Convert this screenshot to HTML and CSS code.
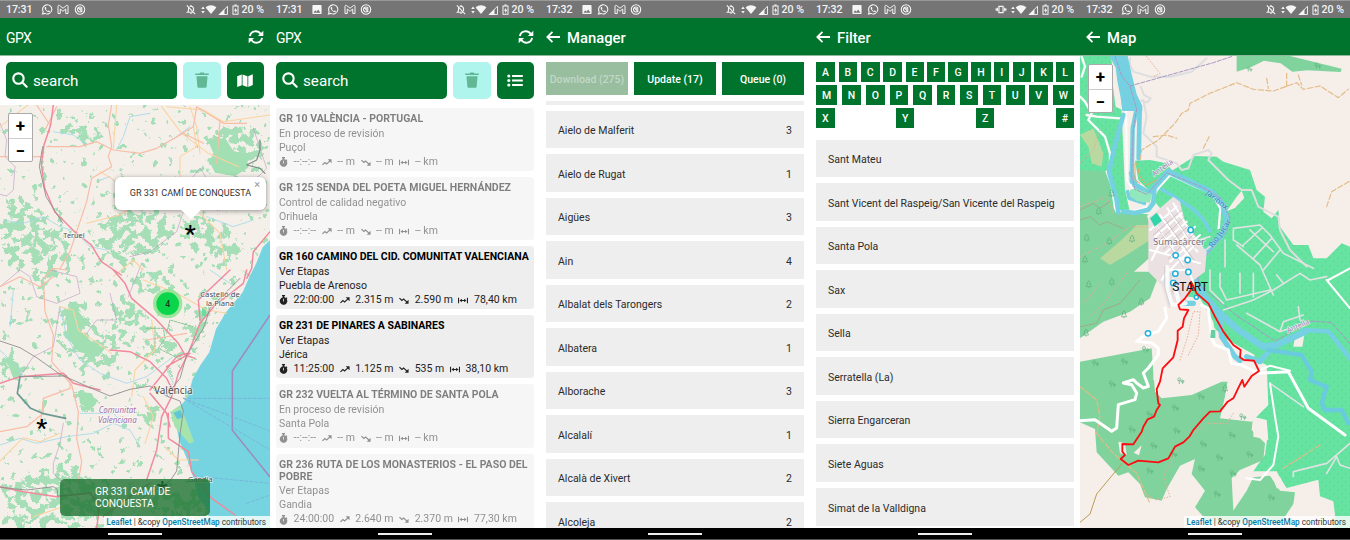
FILE: index.html
```html
<!DOCTYPE html>
<html lang="en">
<head>
<meta charset="utf-8">
<title>GPX</title>
<link rel="stylesheet" href="styles.css">
</head>
<body>
<svg class="sprite" aria-hidden="true">
  <symbol id="i-image" viewBox="0 0 24 24"><path fill="currentColor" d="M22 20V4a2 2 0 0 0-2-2H4a2 2 0 0 0-2 2v16a2 2 0 0 0 2 2h16a2 2 0 0 0 2-2zM8 13.500l3 3.500 3.500-5 5 7H4.500z"/></symbol>
  <symbol id="i-whats" viewBox="0 0 24 24"><path fill="none" stroke="currentColor" stroke-width="2.400" d="M2 22l1.600-5.500A10 10 0 1 1 7.500 20.500z"/><path fill="currentColor" d="M8 6.500c-2 1-1.500 4.500 2 8s7.500 4.200 8.300 1.800c.3-1-.2-1.300-2.600-2.300-1-.3-1.200 1.300-2 1.200-1.500-.5-3.600-2.600-3.900-3.800 0-.7 1.100-1 .8-2C9.900 7 9.500 6 8 6.500z"/></symbol>
  <symbol id="i-mail" viewBox="0 0 24 20"><path fill="none" stroke="currentColor" stroke-width="2" d="M2 18V3.500C2 1.500 4 1 5.500 2.300L12 7.500l6.500-5.200C20 1 22 1.500 22 3.500V18h-4.500V9L12 13.500 6.500 9v9z"/></symbol>
  <symbol id="i-ring" viewBox="0 0 24 24"><g fill="none" stroke="currentColor" stroke-width="2.400"><circle cx="12" cy="12" r="10.300"/><path d="M16 15.500A5.400 5.400 0 1 1 16.500 9M8 8l9 9"/><path d="M11 10.500h5v4"/></g></symbol>
  <symbol id="i-belloff" viewBox="0 0 24 24"><g fill="none" stroke="currentColor" stroke-width="2.400"><path d="M3 3l18 19M7 8.500c-.8 2-.6 6-.8 7.500L4 18h13M9 5.500C13 3.500 17 6 17.500 10v5.500"/></g><path fill="currentColor" d="M10 19.500h4a2 2 0 0 1-4 0zM10.700 2h2.600v3h-2.600z"/></symbol>
  <symbol id="i-vibrate" viewBox="0 0 24 24"><path fill="none" stroke="currentColor" stroke-width="2.600" d="M7.500 5h9v14h-9zM4 8v8M20 8v8M1.300 10v4M22.700 10v4"/></symbol>
  <symbol id="i-updown" viewBox="0 0 8 16"><path fill="currentColor" d="M4 1l3.500 5h-7zM4 15L.5 10h7z"/></symbol>
  <symbol id="i-wifi" viewBox="0 0 24 20"><path fill="currentColor" d="M12 20L0 5.500C7-.8 17-.8 24 5.500z"/></symbol>
  <symbol id="i-signal" viewBox="0 0 20 20"><path fill="none" stroke="currentColor" stroke-width="1.800" d="M2.500 19L19 2.500V19z"/><path fill="currentColor" d="M1 20L13 8v12z"/></symbol>
  <symbol id="i-battery" viewBox="0 0 14 24"><path fill="none" stroke="currentColor" stroke-width="2.200" d="M1.500 4.500h11v18h-11z"/><path fill="currentColor" d="M4.500 1h5v3h-5zM8 8l-4.500 6.500H6.500V20L11 12.500H8z"/></symbol>
  <symbol id="i-refresh" viewBox="0 0 24 22"><g fill="none" stroke="currentColor" stroke-width="3"><path d="M2.500 9.500C4 .5 15 0 19.500 6.300M21.500 12.500C20 21.500 9 22 4.500 15.700"/></g><path fill="currentColor" d="M23.500 1v8.500H15zM.5 21v-8.500H9z"/></symbol>
  <symbol id="i-search" viewBox="0 0 24 24"><path fill="none" stroke="currentColor" stroke-width="3.200" stroke-linecap="round" d="M16 16l6 6M17.500 9.800a7.800 7.800 0 1 1-15.600 0 7.800 7.800 0 0 1 15.600 0z"/></symbol>
  <symbol id="i-trash" viewBox="0 0 22 26"><path fill="currentColor" d="M0 2.500h7l1-1.500h6l1 1.500h7V5H0zM2 7h18l-1.500 17q-.2 1.500-1.700 1.500H5.200Q3.700 25.500 3.500 24z"/></symbol>
  <symbol id="i-map" viewBox="0 0 24 20"><path fill="currentColor" d="M0 3.500L7 .8v16.500L0 20zM8.200.8l7.600 2.700V20l-7.600-2.700zM17 3.500L24 .5V17l-7 3z"/></symbol>
  <symbol id="i-list" viewBox="0 0 24 20"><path fill="currentColor" d="M7.500 1.500H24v3H7.500zM7.500 8.500H24v3H7.500zM7.500 15.500H24v3H7.500z"/><circle cx="2.500" cy="3" r="2.400" fill="currentColor"/><circle cx="2.500" cy="10" r="2.400" fill="currentColor"/><circle cx="2.500" cy="17" r="2.400" fill="currentColor"/></symbol>
  <symbol id="i-back" viewBox="0 0 26 22"><path fill="none" stroke="currentColor" stroke-width="3.400" d="M12 1.500L2.500 11l9.500 9.500M3 11h23"/></symbol>
  <symbol id="i-clock" viewBox="0 0 22 26"><path fill="currentColor" fill-rule="evenodd" d="M7 0h8v3.200h-2v2.900a9.800 9.800 0 0 1 4 1.700L18.800 6l2.400 2.400-1.900 1.900A9.800 9.800 0 1 1 9 6.100V3.200H7zM10 10v7h2v-7z"/></symbol>
  <symbol id="i-up" viewBox="0 0 28 20"><path fill="none" stroke="currentColor" stroke-width="3.400" d="M1 17l7-7 5 4 11-10"/><path fill="currentColor" d="M16 1h11v11z"/></symbol>
  <symbol id="i-down" viewBox="0 0 28 20"><path fill="none" stroke="currentColor" stroke-width="3.400" d="M1 3l7 7 5-4 11 10"/><path fill="currentColor" d="M16 19h11V8z"/></symbol>
  <symbol id="i-dist" viewBox="0 0 28 18"><path fill="none" stroke="currentColor" stroke-width="3" d="M1.500 1v16M26.500 1v16M7 9h14"/><path fill="currentColor" d="M4 9l7-5v10zM24 9l-7-5v10z"/></symbol>
  <symbol id="i-tree" viewBox="0 0 24 28"><path fill="none" stroke="#5fb583" stroke-width="2.200" d="M7 24V11M3 14a4.500 6 0 1 1 8 0zM17 24v-9M13 18a4 5.500 0 1 1 8 0z"/></symbol>
  <symbol id="i-fir" viewBox="0 0 20 26"><path fill="none" stroke="#5fb07e" stroke-width="2" d="M10 2l6 9h-3l5 9H2l5-9H4zM10 20v5"/></symbol>
</svg>
<main class="board">

<section class="screen">
  <div class="status"><span class="time">17:31</span><svg class="s12"><use href="#i-whats"/></svg><svg class="s12"><use href="#i-mail"/></svg><svg class="s12"><use href="#i-ring"/></svg>
    <span class="right"><svg class="bell"><use href="#i-belloff"/></svg><svg class="updown"><use href="#i-updown"/></svg><svg class="wifi"><use href="#i-wifi"/></svg><svg class="signal"><use href="#i-signal"/></svg><svg class="battery"><use href="#i-battery"/></svg><span class="pct">20 %</span></span></div>
  <header class="bar"><span class="brand">GPX</span><svg class="refresh"><use href="#i-refresh"/></svg></header>
  <div class="tools"><div class="search"><svg class="glass"><use href="#i-search"/></svg><span>search</span></div><div class="tool off"><svg class="trash"><use href="#i-trash"/></svg></div><div class="tool"><svg class="t-icon"><use href="#i-map"/></svg></div></div>
  <div class="map">
    <svg class="canvas" viewBox="0 315 810 1269" preserveAspectRatio="none">
      <defs>
        <filter id="patchy" filterUnits="userSpaceOnUse" x="-20" y="300" width="850" height="1300" color-interpolation-filters="sRGB">
          <feGaussianBlur in="SourceAlpha" stdDeviation="14" result="soft"/>
          <feTurbulence type="fractalNoise" baseFrequency="0.042" numOctaves="5" seed="8"/>
          <feColorMatrix values="0 0 0 0 0  0 0 0 0 0  0 0 0 0 0  1 0 0 0 0" result="noise"/>
          <feComposite in="soft" in2="noise" operator="arithmetic" k1="0" k2="0.29" k3="1" k4="-0.24"/>
          <feComponentTransfer><feFuncA type="linear" slope="22" intercept="-11.200"/></feComponentTransfer>
          <feComposite in2="SourceAlpha" operator="arithmetic" k2="1" result="cut"/>
          <feFlood flood-color="#a6dfb7"/><feComposite in2="cut" operator="in"/>
        </filter>
      </defs>
      <rect y="315" width="810" height="1269" fill="#f5efea"/>
      <g filter="url(#patchy)">
        <rect y="315" width="810" height="1269" fill-opacity=".28"/>
        <path d="M620 400l80-30 90 10 20 100-60 30-130-20zM190 350l110 20 10 50-60 10-60-40zM0 600l90-10 40 70 70 30 20 90-60 30-160-20zM310 640l120-30 90 30-20 110-120 50-110-40zM540 640l120 20 80 90-40 50-160-60z"/>
        <path d="M180 900l80 10 30 60 60 50 20 80-90 20-80-50-30-80zM330 940l50-50 60 40-10 80-70 20zM90 820l80-10 20 40-80 20zM0 1060l60 20 30 60-50 10-40-50zM220 1170l60 10 10 50-50-10zM430 1230l50 10-10 40-30-10zM400 1060l100-60 60 50-80 30zM20 1440l200-60 60 60 60 40 20 100H0zM470 1480l180-20 50 80-60 40-190 0zM590 900l70 40-70 120-30-60zM380 820l100-10 80 40-120 30z"/>
      </g>
      <path fill="#a2dfb2" d="M625 425l50-12 25 40 40 10 5 40-40 25-60-10-15-30 10-30zM195 930l30-10 30 40-10 35 30 30 40 20-20 25-60-15-30-40zM235 1175l40 5 15 30-20 20-30-20zM440 1235l30 5-5 25-22-5zM15 1070l40 20 10 40-25 5z"/>
      <path fill="#75d4e0" d="M810 720l-22 22-18 45-22 44-20 46-50 60-30 50-20 70-28 40-22 40-15 55-25 30-10 50 10 50 25 60 20 60 12 50 26 35 8 40 55 30 50 20 40 15 30 52h10z"/>
      <path fill="#a6e3ad" d="M512 1235l28-20 20 50 22 60-14 6-44-50z"/><path fill="#5fc8d7" d="M520 1238l22-8 8 22-18 6z"/><path fill="#67dda0" d="M606 922h14l-2 26h-12z"/>
      <g fill="none" stroke-linejoin="round" stroke-linecap="round">
        <g stroke="#9fd8e8" stroke-width="2.400"><path d="M160 395l60 10 40 30M350 450l20-40 20-60 60-10M480 440l50-30 40-30M10 660l60 10 60-20 50 30 40 12M230 700l40 40 50 10M620 650l80 30 60-20M300 540l30-10 50 60M690 850l-60-40"/><path d="M0 1335l60-20 50 15 90-20 80-10 60-30 50 20 30 50M180 920l20 90 40 70 60 40 80 30 60-20 80-60M30 980l10-110M0 1050l50 50 20 30M380 1280l-40-40-100 0M500 1110l20 40-20 20M640 620l-30-40"/></g>
        <g stroke="#b99ac0" stroke-width="2.600" opacity=".7"><path d="M0 370l20 50-5 50 30 30-5 70-20 18-20-5M390 770l60-15 80-60 20-60 0-70 50-60 20 30 70 20 40 10 50-40 20-20-40-120M0 860l60-50 30 20 20 60 60 20 70-30-10-50-80-20M180 920l-20 120-60 30-40 60M190 1270l-10 60-20 60 0 30 80 80M330 880l20 80-60 0-30 40M425 790l-40 100"/></g>
        <g stroke="#fbd3a0" stroke-width="3.200"><path d="M0 380l90-70M260 670l100-25 60-40M485 320l60 80 80 60 90 40M340 830l60-50 30 30M600 640l60 60 20 110M500 320l110 10 60 35 140-20M600 460l-10-80-20-60M300 515l100 60M540 560v-90l50-30-10-60M350 315l-10 130"/><path d="M180 920l40 10 15 60 60 40 40 30M395 1190l10-80 60-60-10-90M430 1190l30 60-25 80M180 1300l-60 25-50-12-70 70M100 1550l90-30M495 1340l40 40 60 0M430 840l100 40 90 50 60 10"/></g>
        <g stroke="#f8bda6" stroke-width="3.600"><path d="M140 440h100l50-15 50 25 80 10 50-15 80-45 60 30M335 315l-10 60 10 65-10 30 10 30-60 35-15 70-30 90-20 60-30 50M170 320l-35 70M660 360l-10 130M0 470h130M110 315l40 60M530 410l50-30 10-60 80 50 70 0"/><path d="M0 860l60-30 60 30 40-30M200 810l-40-5-30 30 5 100 25 70-5 80 60 70 20 80-5 80 15 70-10 60M0 1295l80-15 50-40 0-45 80-30 0-15M440 1020l120-20M120 1280l10-80"/></g>
        <g stroke="#f08a9c" stroke-width="4.400"><path d="M160 315l-8 60-20 60-8 60 10 70 30 70 60 60 50 40 30 50 60 40M340 810l35 40 20 45 70 60 70 75 20 35 30 10M740 810l-10 40-50 40-30 20-50 60-35 90-30 60-20 70-30 60-15 100-30 90M600 960l-5-60 95-90M810 695l-50 60-5 50-15 30M0 1150l60-20 130-10 30 30 80 20"/><path d="M330 1050l60 5 60 30 50 50 15 30M500 1100l70-40M450 1180l50 60 10 40M505 1240v75l60 40 10 60 60 80 70 50M0 1460l70 15 100 15M170 1490l100-10 30 30-10 74M450 1170l80-100 30-10M310 1550l80-60 60-40"/></g>
        <g stroke="#8e8b8d" stroke-width="2.600"><path d="M128 440l-10 60 20 90 50 80M0 1023l60 20 50 30 70 50 90 40 60 25 60-20 60-10 50 30 40 15 10 30-10 70-10 110-20 30-100 60M505 1190l-5-5 40-50 20-70 50-80 20-60 90-90M0 1462l80 8 80-10 12 8v20l100-10 25 60M60 1130l140-2"/></g>
        <path d="M60 1130l-8 50 40 45 35 15 70 15" stroke="#6e9b91" stroke-width="5"/><path d="M780 420v30l-10 30-30 15 40 10 15 15" stroke="#7d8b84" stroke-width="3.500"/>
        <path d="M440 985l50 0 5 30-20 30 50 25 20 10M465 980v60M500 1000l10-40 70 20" stroke="#8bc493" stroke-width="3" stroke-dasharray="7 4"/>
        <path d="M810 945L697 1113v178l113 140" stroke="#9f8abd" stroke-width="4.500"/>
        <g stroke="#79aedb" stroke-width="2.400" stroke-dasharray="9 6"><path d="M550 1195h260M550 1195l260 98M550 1195l260 155M600 1430l210 20M740 1510l70-25"/></g>
      </g>
      <g class="label" font-size="23" text-anchor="middle"><text x="222" y="714" font-size="22">Teruel</text><text x="660" y="891">Castelló de</text><text x="660" y="918">la Plana</text><text x="520" y="1183" font-size="30">València</text><text x="601" y="1446" font-size="22">Gandia</text>
      <g class="region" font-size="24"><text x="352" y="1239">Comunitat</text><text x="352" y="1269">Valenciana</text></g></g>
      <circle cx="503" cy="911" r="44" fill="#8be38f" opacity=".85"/><circle cx="503" cy="911" r="34" fill="#0bd54b"/><text class="pin" x="503" y="920" font-size="26" text-anchor="middle">4</text>
      <g class="star" font-size="74" text-anchor="middle"><text x="571" y="727">*</text><text x="125" y="1309">*</text><text x="487" y="1493">*</text></g>
    </svg>
    <div class="zoomer"><b>+</b><b>−</b></div>
    <div class="popup">GR 331 CAMÍ DE CONQUESTA<i>×</i></div>
    <div class="toast">GR 331 CAMÍ DE CONQUESTA</div>
    <div class="credit"><b>Leaflet</b> | &amp;copy <b>OpenStreetMap</b> contributors</div>
  </div>
  <footer class="nav"></footer>
</section>

<section class="screen">
  <div class="status"><span class="time">17:31</span><svg class="s12"><use href="#i-image"/></svg><svg class="s12"><use href="#i-whats"/></svg><svg class="s12"><use href="#i-mail"/></svg><svg class="s12"><use href="#i-ring"/></svg>
    <span class="right"><svg class="bell"><use href="#i-belloff"/></svg><svg class="updown"><use href="#i-updown"/></svg><svg class="wifi"><use href="#i-wifi"/></svg><svg class="signal"><use href="#i-signal"/></svg><svg class="battery"><use href="#i-battery"/></svg><span class="pct">20 %</span></span></div>
  <header class="bar"><span class="brand">GPX</span><svg class="refresh"><use href="#i-refresh"/></svg></header>
  <div class="tools"><div class="search"><svg class="glass"><use href="#i-search"/></svg><span>search</span></div><div class="tool off"><svg class="trash"><use href="#i-trash"/></svg></div><div class="tool"><svg class="t-icon"><use href="#i-list"/></svg></div></div>
  <div class="cards">
    <article class="card dim"><h3>GR 10 VALÈNCIA - PORTUGAL</h3><p>En proceso de revisión</p><p>Puçol</p><p class="stats"><svg class="clk"><use href="#i-clock"/></svg>--:--:--<svg><use href="#i-up"/></svg>-- m<svg><use href="#i-down"/></svg>-- m<svg><use href="#i-dist"/></svg>-- km</p></article>
    <article class="card dim"><h3>GR 125 SENDA DEL POETA MIGUEL HERNÁNDEZ</h3><p>Control de calidad negativo</p><p>Orihuela</p><p class="stats"><svg class="clk"><use href="#i-clock"/></svg>--:--:--<svg><use href="#i-up"/></svg>-- m<svg><use href="#i-down"/></svg>-- m<svg><use href="#i-dist"/></svg>-- km</p></article>
    <article class="card"><h3>GR 160 CAMINO DEL CID. COMUNITAT VALENCIANA</h3><p>Ver Etapas</p><p>Puebla de Arenoso</p><p class="stats"><svg class="clk"><use href="#i-clock"/></svg>22:00:00<svg><use href="#i-up"/></svg>2.315 m<svg><use href="#i-down"/></svg>2.590 m<svg><use href="#i-dist"/></svg>78,40 km</p></article>
    <article class="card"><h3>GR 231 DE PINARES A SABINARES</h3><p>Ver Etapas</p><p>Jérica</p><p class="stats"><svg class="clk"><use href="#i-clock"/></svg>11:25:00<svg><use href="#i-up"/></svg>1.125 m<svg><use href="#i-down"/></svg>535 m<svg><use href="#i-dist"/></svg>38,10 km</p></article>
    <article class="card dim"><h3>GR 232 VUELTA AL TÉRMINO DE SANTA POLA</h3><p>En proceso de revisión</p><p>Santa Pola</p><p class="stats"><svg class="clk"><use href="#i-clock"/></svg>--:--:--<svg><use href="#i-up"/></svg>-- m<svg><use href="#i-down"/></svg>-- m<svg><use href="#i-dist"/></svg>-- km</p></article>
    <article class="card dim"><h3>GR 236 RUTA DE LOS MONASTERIOS - EL PASO DEL POBRE</h3><p>Ver Etapas</p><p>Gandia</p><p class="stats"><svg class="clk"><use href="#i-clock"/></svg>24:00:00<svg><use href="#i-up"/></svg>2.640 m<svg><use href="#i-down"/></svg>2.370 m<svg><use href="#i-dist"/></svg>77,30 km</p></article>
  </div>
  <footer class="nav"></footer>
</section>

<section class="screen">
  <div class="status"><span class="time">17:32</span><svg class="s12"><use href="#i-image"/></svg><svg class="s12"><use href="#i-whats"/></svg><svg class="s12"><use href="#i-mail"/></svg><svg class="s12"><use href="#i-ring"/></svg>
    <span class="right"><svg class="bell"><use href="#i-belloff"/></svg><svg class="updown"><use href="#i-updown"/></svg><svg class="wifi"><use href="#i-wifi"/></svg><svg class="signal"><use href="#i-signal"/></svg><svg class="battery"><use href="#i-battery"/></svg><span class="pct">20 %</span></span></div>
  <header class="bar"><svg class="back"><use href="#i-back"/></svg><span class="title">Manager</span></header>
  <div class="tabs"><span class="tab used">Download (275)</span><span class="tab">Update (17)</span><span class="tab">Queue (0)</span></div>
  <div class="rows scrolled">
    <div class="row cut"></div>
    <div class="row"><span>Aielo de Malferit</span><span>3</span></div>
    <div class="row"><span>Aielo de Rugat</span><span>1</span></div>
    <div class="row"><span>Aigües</span><span>3</span></div>
    <div class="row"><span>Ain</span><span>4</span></div>
    <div class="row"><span>Albalat dels Tarongers</span><span>2</span></div>
    <div class="row"><span>Albatera</span><span>1</span></div>
    <div class="row"><span>Alborache</span><span>3</span></div>
    <div class="row"><span>Alcalalí</span><span>1</span></div>
    <div class="row"><span>Alcalà de Xivert</span><span>2</span></div>
    <div class="row"><span>Alcoleja</span><span>2</span></div>
  </div>
  <footer class="nav"></footer>
</section>

<section class="screen">
  <div class="status"><span class="time">17:32</span><svg class="s12"><use href="#i-image"/></svg><svg class="s12"><use href="#i-whats"/></svg><svg class="s12"><use href="#i-mail"/></svg><svg class="s12"><use href="#i-ring"/></svg>
    <span class="right"><svg class="bell"><use href="#i-vibrate"/></svg><svg class="updown"><use href="#i-updown"/></svg><svg class="wifi"><use href="#i-wifi"/></svg><svg class="signal"><use href="#i-signal"/></svg><svg class="battery"><use href="#i-battery"/></svg><span class="pct">20 %</span></span></div>
  <header class="bar"><svg class="back"><use href="#i-back"/></svg><span class="title">Filter</span></header>
  <div class="keys">
    <div class="keyrow"><b>A</b><b>B</b><b>C</b><b>D</b><b>E</b><b>F</b><b>G</b><b>H</b><b>I</b><b>J</b><b>K</b><b>L</b></div>
    <div class="keyrow"><b>M</b><b>N</b><b>O</b><b>P</b><b>Q</b><b>R</b><b>S</b><b>T</b><b>U</b><b>V</b><b>W</b></div>
    <div class="keyrow"><b>X</b><b>Y</b><b>Z</b><b>#</b></div>
  </div>
  <div class="rows">
    <div class="row"><span>Sant Mateu</span></div>
    <div class="row"><span>Sant Vicent del Raspeig/San Vicente del Raspeig</span></div>
    <div class="row"><span>Santa Pola</span></div>
    <div class="row"><span>Sax</span></div>
    <div class="row"><span>Sella</span></div>
    <div class="row"><span>Serratella (La)</span></div>
    <div class="row"><span>Sierra Engarceran</span></div>
    <div class="row"><span>Siete Aguas</span></div>
    <div class="row"><span>Simat de la Valldigna</span></div>
  </div>
  <footer class="nav"></footer>
</section>

<section class="screen">
  <div class="status"><span class="time">17:32</span><svg class="s12"><use href="#i-whats"/></svg><svg class="s12"><use href="#i-mail"/></svg><svg class="s12"><use href="#i-ring"/></svg>
    <span class="right"><svg class="bell"><use href="#i-belloff"/></svg><svg class="updown"><use href="#i-updown"/></svg><svg class="wifi"><use href="#i-wifi"/></svg><svg class="signal"><use href="#i-signal"/></svg><svg class="battery"><use href="#i-battery"/></svg><span class="pct">20 %</span></span></div>
  <header class="bar"><svg class="back"><use href="#i-back"/></svg><span class="title">Map</span></header>
  <div class="map">
    <svg class="canvas" viewBox="0 168 810 1416" preserveAspectRatio="none">
      <defs><pattern id="farm" width="24" height="24" patternUnits="userSpaceOnUse"><rect width="24" height="24" fill="#66e2a1"/><path fill="#4fcd90" d="M4 4h3v3H4zM16 16h3v3h-3z"/></pattern></defs>
      <rect y="168" width="810" height="1416" fill="#f5eee9"/>
      <path fill="url(#farm)" d="M0 168h90l15 50 20 30 0 90 10 230 15 70 55 5-20 30-80-10-20-80-10-40-75 0zM345 468l65 2 20 15 80 25 20 60 25 20-5 45 25 20 20-25 5 50 40 55 45 0 15 40 40 0 45-45 25 10v844h-50l5-40-5-40-40-15-5-50-95 25-20-30-10-20-70 0 35-50 8-60-25-30-25-60-40-30 50-50v-70l-90-50-50-50-110-120-15-20 80-120 10-70-40-50-60-30-30-5zM240 560l30-35 75 40 60 30 25 50-5 50-75 100-25-15-10-60-45-60-50-60zM165 482l45-2 50 10 15 20-50 50-20 10-30-30z"/>
      <path fill="#80d39c" d="M470 168h160l155 38-3 10-100-5-45 4-35-25-50-8-40 20-42 13zM0 510l80 5 15 90 10 35 95 5 20 60-8 65-50 45 78 0-30 80-60 40-80 30-70 50zM0 1080l90-68 75-12 60 20-5 120 45 0 60-7 70-35 50-18 5 10-20 140 90 10-5 50 40 40-5 50-70 30-25 25 5 97 40-60 20-40 50-5 30 45 45 5-5 35-40 60h-210l-45-50 30-50-40-50 10-45-45 20-40 70-15 35-50-10-15-40-35-35-30 10-65-70-5-70-45-20z"/>
      <path fill="#b9d9a0" d="M0 405l40-20 30 75-5 40-30-10-10-50zM60 775l70-60 40-40 35 0 5 45-70 45-50 30z"/>
      <g fill="#f5eee9"><path d="M115 1325l20 5 5 35-20-5zM95 190l20 10 12 130-20-10-8-60zM185 1336l-8 30-16-8zM645 1010l30-18-8 48h-27zM470 590l15-18 8 22-28 30-25 10zM520 1250l40 10 5 60-45-10zM575 1425l25 5 20 40-30-5z"/><path d="M0 1085v-20l80-55 85-15 70-60 25-120 30 70 70 10 40 70 10 60 45 20 105 50 5 120-50 50-95-10 25-110-20 0-90 40-90 10-20-20-5-60-5-70z"/></g>
      <g fill="none" stroke-linejoin="round" stroke-linecap="round">
        <path stroke="#dedede" stroke-width="6" d="M150 175l0 20 10 20 50 15 60 0 65-15 45-40M182 260l10 25 20 10-10 12-20-5M190 300l10 50-10 50 40 40 0 30 60 20 15 20 20-5 15-40 45-15 10 10-10 20 60 60 40 30 30 0 20 50 60 30 5 40 30 60 50 50"/>
        <path stroke="#fbfbfb" stroke-width="7" d="M20 345l30 5 80 6M5 170l10 30-10 30M0 290l15 15 20 35-10 20 50 50 15 50 0 50-10 5 15 40 10 70 5 10 60-3 40-15M138 330l3 210 15 25 45 20 20-5 50-55 75 35 50 20 25 45-5 60"/>
        <path fill="#75d1e1" stroke="none" d="M88 168h55l12 55 15 60 17 35 0 15-60 0-5-40-10-50-5-40z"/>
        <g stroke="#75d1e1">
          <path stroke-width="13" d="M170 325l-12 60-3 160"/><path stroke-width="14" d="M179 325l-3 150"/>
          <path stroke-width="17" d="M155 520l10 35 42 25 58-66 75 36 55 26 34 38 11 46-10 38-80 92"/>
          <path stroke-width="20" d="M350 785l-10 50 30 50 45 50 60 55 75 50 40-5 85-40"/>
          <path stroke-width="14" d="M670 990l75 4 65 81M130 345l-25 90-18 80 22 80 6 42M130 635l35 4 40-10 15-20 3-40"/>
          <path stroke-width="11" d="M245 568l35 20 60 40 30 30 20 35M143 575l5 20 45 15"/>
          <path stroke-width="16" d="M395 915l25 45 5 50 40 60 15 12M500 1070l40 15 30-35M310 910h30"/>
        </g>
        <path fill="#91e8bd" stroke="none" d="M150 570l15-5 50 18-5 25-40-5-20-15z"/>
        <path stroke="#69cbdd" stroke-width="13" d="M565 1050l100 15 30 50-5 25 50 20-15 50 10 20 50 0 20 40"/>
        <path stroke="#a899c4" stroke-width="3" stroke-dasharray="12 5" d="M105 168l20 60 25 30 20 70-10 60-5 140 10 40 35 15 60-65 110 45 50 30 30 60-10 40-85 100 0 60 110 90 120 80 110-60 60 5 65 75M150 258l250-70 60-20"/>
        <path stroke="#e4bb85" stroke-width="3.500" stroke-dasharray="16 7" d="M180 480l5-30 50-30 50-50 20-30 20-10 5-20 60-30 80-32 50 20 60 5 70-25 20 20 50-10 55 35 30-25M370 445l20-40M220 410l40-5 30 10M740 620l15-45 60-35M560 235l5 30M620 220l0 40M655 225l10 30M0 1160l50 40 10 50-10 50 50 60 70 60 40 90M610 1405l110-70"/>
        <path stroke="#e8a860" stroke-width="3" d="M170 490l10 40 20 25 30-15M165 490l0 50 15 10"/>
        <path stroke="#efaa96" stroke-width="3" stroke-dasharray="2 7" d="M200 170l40 50-20 10M60 390l-20 60-40 40M0 620l80-30 20 50M0 770l80-40 70-50 50 0M60 850l-40 50-20 10M140 820l-60 80-60 60M300 1080l20-60 20-85h20l-5 70-30 60M440 1210l20-20M460 1240l-20 30-60 0-80 60-50 100 20 60-40 10-40-20"/>
        <path stroke="#bb9d58" stroke-width="3" d="M125 1392l-75 90-20 60-30 25"/>
        <g stroke="#a1a98e" stroke-width="3"><path d="M0 630l40-20 20 15 30-20M0 980l50-10 20-40 50-20 60-70M0 660l30-10 30 25 20-10 50 20"/></g>
        <g stroke="#dfe3e2" stroke-width="5"><path d="M460 685l80-10 30 30 40 55 90 45M470 735l70 60 40 90M545 685l-55 50M575 715l-55 60M600 750l-50 60M510 690l70 65M460 690l0 30 30 20M435 720l0 80M430 930l90-30 60-30 80-50 30 20 50-10M420 820l0 40 20 40 130-30M480 820l0 60M520 820v70M590 825l20 25M500 940l100 55 30-10M570 1150l100 70M390 740l-40 30-20-20 25-30 35-10M390 810l0 60 40 40M640 1430v-15l100-25 70-60M740 1420l30-50 10 25 30 10M600 995l10-30 60-20M655 920l5 40"/></g>
        <g stroke="#fff" stroke-width="9"><path d="M0 1262l45-3 50 35 15-10 5-70 50-15 5-20-15-25-25-5 30-10 10 10 20 15 15-5-15-40 15-15 30-40 0-20-20-15-45-5 20-15 45-15 25-40-5-30M365 915l20 10 10 90 10 20 40 15 10 40 30 5 50 25 90-5 60 110 110 80"/><path d="M530 1115l40-18 60 15" stroke-width="6"/><path d="M570 1150l15 100 10 60-15 85-40 45-40-5" stroke-width="6"/><path d="M740 840l70 85M810 805l-65 35" stroke-width="6"/></g>
        <g fill="#ebe0e2" stroke="none"><path d="M205 655l75-65 20 15 15 60 65 90-5 60-40 30-20 60-50 20-20-70-40-40z"/></g>
        <g stroke="#fff" stroke-width="6"><path d="M220 665l90 130M240 645l90 130M262 625l90 130M280 610l60 100M210 690l80-70M225 710l80-70M240 735l80-70M255 760l90-80M270 785l90-80M210 750l150 40M250 830l90-90M245 840l20-30 60 0 20 50M215 780l30-60"/></g>
        <g stroke="#bfb3b9" stroke-width="2"><path d="M230 680l80 120M252 655l90 125M272 635l75 110M220 705l85-75M235 725l80-75M250 748l85-80M265 775l85-80"/></g>
        <path stroke="#fafafa" stroke-width="12" d="M262 800l0 70 15 45 40-5M280 840l15 60"/><path stroke="#cdcbcb" stroke-width="2.500" d="M254 800l0 60 15 55M290 850l12 35M272 820l5 60"/>
        <path fill="#31d5a9" stroke="none" d="M210 655l20-17 16 24-22 18z"/><path fill="#67cda3" stroke="none" d="M393 990h13v24h-15z"/>
        <g fill="#fff" stroke="#1fb2dd" stroke-width="4.500"><circle cx="332" cy="690" r="8"/><circle cx="287" cy="766" r="8"/><circle cx="323" cy="780" r="8"/><circle cx="286" cy="821" r="8"/><circle cx="325" cy="816" r="8"/><circle cx="204" cy="1000" r="8"/><circle cx="280" cy="849" r="8"/><circle cx="349" cy="892" r="6"/></g>
      </g>
      <g><svg x="702" y="184" width="24" height="26"><use href="#i-tree"/></svg><svg x="498" y="196" width="22" height="22"><use href="#i-tree"/></svg><svg x="185" y="1034" width="24" height="28"><use href="#i-tree"/></svg><svg x="122" y="1070" width="24" height="28"><use href="#i-tree"/></svg><svg x="35" y="1075" width="24" height="28"><use href="#i-tree"/></svg><svg x="86" y="1138" width="24" height="28"><use href="#i-tree"/></svg><svg x="291" y="1128" width="24" height="28"><use href="#i-tree"/></svg><svg x="352" y="1175" width="24" height="28"><use href="#i-tree"/></svg><svg x="275" y="1209" width="24" height="28"><use href="#i-tree"/></svg><svg x="198" y="1228" width="24" height="28"><use href="#i-tree"/></svg><svg x="145" y="1274" width="24" height="28"><use href="#i-tree"/></svg><svg x="279" y="1278" width="24" height="28"><use href="#i-tree"/></svg><svg x="210" y="1323" width="24" height="28"><use href="#i-tree"/></svg><svg x="359" y="1318" width="24" height="28"><use href="#i-tree"/></svg><svg x="445" y="1291" width="24" height="28"><use href="#i-tree"/></svg><svg x="477" y="1236" width="24" height="28"><use href="#i-tree"/></svg><svg x="498" y="1349" width="24" height="28"><use href="#i-tree"/></svg><svg x="407" y="1358" width="24" height="28"><use href="#i-tree"/></svg><svg x="353" y="1392" width="24" height="28"><use href="#i-tree"/></svg><svg x="448" y="1406" width="24" height="28"><use href="#i-tree"/></svg><svg x="198" y="1398" width="24" height="28"><use href="#i-tree"/></svg><svg x="400" y="1468" width="24" height="28"><use href="#i-tree"/></svg><svg x="563" y="1478" width="24" height="28"><use href="#i-tree"/></svg><svg x="270" y="1348" width="24" height="28"><use href="#i-tree"/></svg>
      <svg x="85" y="567" width="20" height="26"><use href="#i-fir"/></svg><svg x="46" y="620" width="20" height="26"><use href="#i-fir"/></svg><svg x="10" y="700" width="20" height="26"><use href="#i-fir"/></svg><svg x="78" y="710" width="20" height="26"><use href="#i-fir"/></svg><svg x="146" y="703" width="20" height="26"><use href="#i-fir"/></svg><svg x="5" y="765" width="20" height="26"><use href="#i-fir"/></svg><svg x="16" y="840" width="20" height="26"><use href="#i-fir"/></svg><svg x="85" y="832" width="20" height="26"><use href="#i-fir"/></svg><svg x="122" y="930" width="20" height="26"><use href="#i-fir"/></svg><svg x="174" y="892" width="20" height="26"><use href="#i-fir"/></svg><svg x="8" y="985" width="20" height="26"><use href="#i-fir"/></svg><svg x="425" y="1152" width="20" height="26"><use href="#i-fir"/></svg></g>
      <g class="label"><text x="297" y="734" font-size="28" text-anchor="middle" class="town">Sumacàrcer</text><g class="admin" font-size="22"><text transform="translate(222 530) rotate(-35)">Antella</text><text transform="translate(624 999) rotate(-24)">Antella</text></g><g class="river" font-size="24"><text transform="translate(376 582) rotate(38)">Jaribnx</text><text transform="translate(398 745) rotate(-55)">Río Júcar</text></g></g>
      <path fill="none" stroke="#fb0d12" stroke-width="5.500" stroke-linejoin="round" d="M333 845l17 35 35 30 20 40 25 45 30 40 22 15-2 22 12 8 30 2 15 31-22 15-22 32-6-20-10 20-17 35-17 10-23 29-30 1-20 20-30 35-12 20-18 17-25 13-20 35-30 12-60-5-30 13-23-18 13-12-8-10v-23l33 1 25-38 5-15 13-22 19-8 8-20 10-15-5-5-5-42 10-23 8-40 32-33 13-52v-28l15-12 4-25 13-25-25-2-5-13 20-20 18-25z"/>
      <text class="start" x="330" y="873" font-size="36" text-anchor="middle">START</text>
    </svg>
    <div class="zoomer"><b>+</b><b>−</b></div>
    <div class="credit"><b>Leaflet</b> | &amp;copy <b>OpenStreetMap</b> contributors</div>
  </div>
  <footer class="nav"></footer>
</section>
</main>
</body>
</html>
```
FILE: styles.css
```css
* { box-sizing: border-box; }
body { margin: 0; background: #fff; font-family: Roboto, "Liberation Sans", sans-serif; color: #2b2b2b; }
.sprite { display: none; }
.board { display: grid; grid-template-columns: repeat(5, 270px); width: 1350px; height: 540px; overflow: hidden; }
.screen { display: flex; flex-direction: column; height: 540px; min-width: 0; overflow: hidden; background: #fff; }

.status { flex: none; height: 18px; padding: 0 6px; display: flex; align-items: center; gap: 4.500px; background: #757575; border-top: 1px solid #999; color: #f5f5f5; font-size: 10.600px; font-weight: 500; }
.status svg { flex: none; display: block; }
.time { width: 30px; white-space: nowrap; letter-spacing: -.1px; }
.s12 { width: 12px; height: 11px; }
.right { margin-left: auto; display: flex; align-items: center; }
.bell { width: 12px; height: 11px; margin-right: 4px; }
.updown { width: 4px; height: 8px; }
.wifi { width: 12px; height: 9px; margin-right: 1px; }
.signal { width: 10px; height: 10px; margin-right: 4px; }
.battery { width: 7px; height: 11px; margin-right: 3px; }
.pct { font-size: 10.600px; white-space: nowrap; }

.bar { flex: none; height: 38px; padding: 1px 6px 0; display: flex; align-items: center; background: #00742c; border-bottom: 1px solid #8fb99b; color: #fff; }
.brand { padding-top: 1px; font-size: 14px; letter-spacing: -.6px; }
.refresh { width: 16px; height: 14px; margin-left: auto; }
.back { width: 14px; height: 12px; margin-right: 7px; }
.title { padding-top: 2px; font-size: 14.800px; font-weight: 500; }

.tools { flex: none; height: 49px; padding: 5.500px 6px 6px; display: grid; grid-template-columns: 171px 37.500px 37.500px; gap: 6px; }
.search { display: flex; align-items: center; gap: 5px; padding: 2px 0 0 6px; border-radius: 5px; background: #00742c; color: #fff; font-size: 15.200px; }
.glass { width: 16px; height: 16px; margin-top: -2px; }
.tool { display: grid; place-items: center; border-radius: 5px; background: #00742c; color: #fff; }
.off { background: #aff5ee; color: #62b795; }
.trash { width: 14px; height: 16px; }
.t-icon { width: 16px; height: 13px; }

.map { position: relative; flex: 1; min-height: 0; overflow: hidden; }
.canvas { display: block; width: 100%; height: 100%; }
.label { font-family: "Noto Sans", sans-serif; fill: #4c4c4c; stroke: #fff; stroke-width: 4px; stroke-opacity: .7; paint-order: stroke; }
.region { fill: #a270a8; font-style: italic; }
.town { fill: #77707a; }
.admin { fill: #a67ab0; }
.river { fill: #3585bd; stroke-opacity: .2; }
.pin { font-weight: 500; fill: #113d1d; }
.star { font-weight: 500; fill: #000; }
.start { fill: #111; }
.zoomer { position: absolute; left: 8px; top: 8px; width: 25px; height: 49px; display: grid; grid-template-rows: 1fr 1fr; background: #fff; border: 1px solid #aaa; border-radius: 2px; color: #000; font-size: 17px; line-height: 24px; text-align: center; }
.zoomer b + b { border-top: 1px solid #ccc; }
.popup { position: absolute; left: 115px; top: 72px; width: 151px; height: 33px; border-radius: 6px; background: #fff; box-shadow: 0 1px 5px #0006; font-size: 9.060px; line-height: 33px; text-align: center; white-space: nowrap; color: #333; }
.popup i { position: absolute; right: 6px; top: 2px; font-size: 11px; line-height: 12px; font-style: normal; color: #999; }
.popup::after { content: ""; position: absolute; left: 66px; top: 33px; border: solid transparent; border-width: 9px 10px 0; border-top-color: #fff; }
.toast { position: absolute; left: 60px; bottom: 12px; width: 150px; height: 37px; padding: 7px 30px 0 35px; border-radius: 5px; background: rgba(30, 115, 50, .8); color: #fff; font-size: 10.200px; line-height: 12px; }
.credit { position: absolute; right: 0; bottom: 0; height: 12px; padding: 0 4px 0 3px; background: #fffc; font-size: 8.200px; line-height: 12px; white-space: nowrap; color: #333; }
.credit b { color: #0879a8; font-weight: 500; }

.cards { flex: 1; min-height: 0; overflow: hidden; padding: 3px 6px 0; display: flex; flex-direction: column; gap: 6px; }
.card { flex: none; min-height: 63px; padding: 4px 3px 2px; border-radius: 3px; background: #eee; color: #222; }
.card h3 { margin: 0; padding: 1px 0 1.500px; font-size: 10.520px; line-height: 12px; font-weight: 700; color: #000; }
.card p { margin: 0; font-size: 10.500px; line-height: 14.200px; white-space: nowrap; }
.card .stats { display: flex; align-items: center; gap: 5.600px; }
.stats svg { width: 10px; height: 7px; }
.stats .clk { width: 9px; height: 10px; }
.dim { opacity: .5; }

.tabs { flex: none; padding: 5.500px 6px 6px; display: grid; grid-template-columns: repeat(3, 1fr); gap: 6px; }
.tab { height: 33px; background: #00742c; color: #fff; font-size: 10.500px; font-weight: 500; line-height: 35px; text-align: center; white-space: nowrap; }
.used { background: #99bd9f; color: #c1d9c5; }

.rows { flex: 1; min-height: 0; overflow: hidden; padding: 12px 6px 0; display: flex; flex-direction: column; gap: 6px; }
.scrolled { padding-top: 0; }
.row { flex: none; height: 37.530px; padding: 2.500px 12px 0; display: flex; align-items: center; justify-content: space-between; background: #eee; font-size: 10.500px; white-space: nowrap; }
.cut { height: 4px; padding: 0; }

.keys { flex: none; padding: 5.500px 6px 0; display: grid; gap: 3.200px; }
.keyrow { display: flex; justify-content: space-between; }
.keyrow b { height: 20px; padding: 0 6px; background: #00742c; color: #fff; font-size: 10.500px; line-height: 21px; font-weight: 500; }

.nav { flex: none; height: 12px; display: grid; place-items: center; background: #000; border-bottom: 1px solid #555; }
.nav::after { content: ""; width: 54px; height: 2px; background: #eee; }
```
